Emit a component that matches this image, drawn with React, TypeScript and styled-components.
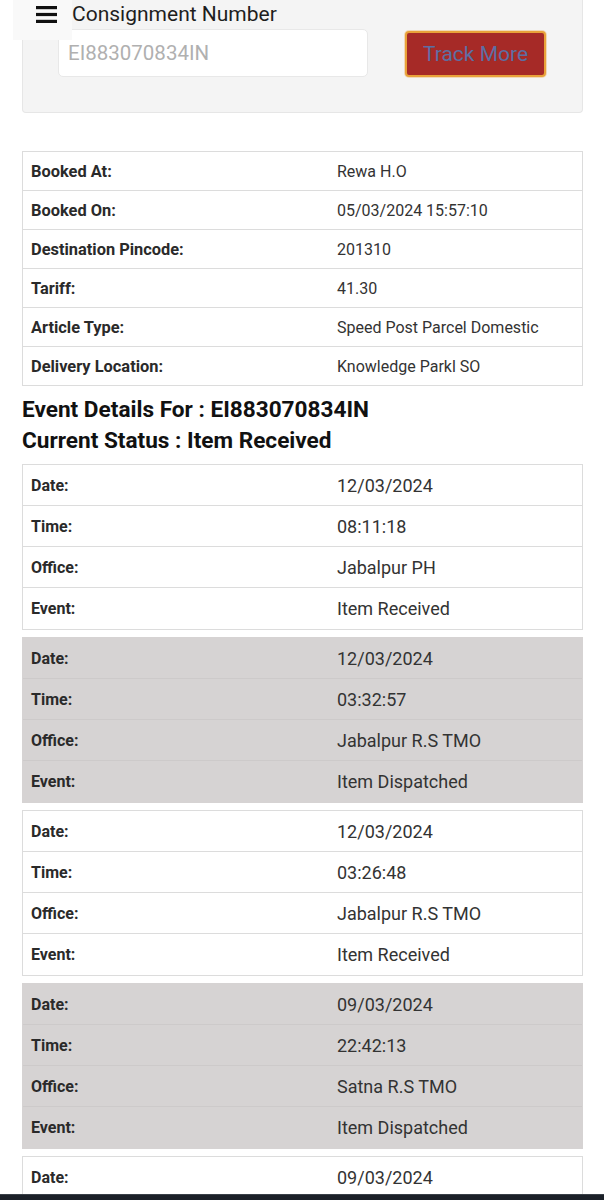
import React from 'react';
import styled, { createGlobalStyle } from 'styled-components';

const GlobalStyle = createGlobalStyle`
  body {
    margin: 0;
    background: #fff;
    font-family: Roboto, "Liberation Sans", Arial, sans-serif;
    color: #222;
  }
`;

const info = [
	{ label: 'Booked At:', value: 'Rewa H.O' },
	{ label: 'Booked On:', value: '05/03/2024 15:57:10' },
	{ label: 'Destination Pincode:', value: '201310' },
	{ label: 'Tariff:', value: '41.30' },
	{ label: 'Article Type:', value: 'Speed Post Parcel Domestic' },
	{ label: 'Delivery Location:', value: 'Knowledge Parkl SO' },
];

const events = [
	{ date: '12/03/2024', time: '08:11:18', office: 'Jabalpur PH', event: 'Item Received' },
	{ date: '12/03/2024', time: '03:32:57', office: 'Jabalpur R.S TMO', event: 'Item Dispatched' },
	{ date: '12/03/2024', time: '03:26:48', office: 'Jabalpur R.S TMO', event: 'Item Received' },
	{ date: '09/03/2024', time: '22:42:13', office: 'Satna R.S TMO', event: 'Item Dispatched' },
	{ date: '09/03/2024', time: '', office: '', event: '' },
];

const Page = styled.div`
	position: relative;
	padding: 0 21px 0 22px;
	height: 1200px;
	overflow: hidden;
`;

const MenuButton = styled.div`
	position: absolute;
	left: 13px;
	top: 0;
	width: 59px;
	height: 40px;
	background: #f9f9f9;
	display: flex;
	align-items: flex-start;
	padding: 6px 0 0 23px;
	box-sizing: border-box;
	z-index: 2;
`;

const SearchPanel = styled.div`
	background: #f4f4f4;
	border: 1px solid #e6e6e6;
	border-top: none;
	border-radius: 0 0 4px 4px;
	padding: 0 36px 36px 35px;
	height: 113px;
	box-sizing: border-box;
`;

const FieldLabel = styled.div`
	position: relative;
	z-index: 3;
	font-size: 21px;
	line-height: 29px;
	color: #1e1e1e;
	padding-left: 14px;
`;

const SearchRow = styled.div`
	display: flex;
	align-items: center;
	justify-content: space-between;
`;

const Input = styled.input`
	width: 310px;
	height: 48px;
	box-sizing: border-box;
	border: 1px solid #e8e8e8;
	border-radius: 5px;
	background: #fff;
	padding: 0 9px;
	font-family: Roboto, "Liberation Sans", Arial, sans-serif;
	font-size: 20.5px;
	color: #333;
	&::placeholder {
		color: #b0b0b0;
	}
`;

const TrackButton = styled.button`
	width: 141px;
	height: 46px;
	margin-top: 2px;
	background: #a62a27;
	border: 2px solid #e9a23a;
	border-radius: 4px;
	box-shadow: 0 0 0 1px #f1d9b8;
	color: #5c6fa3;
	font-family: Roboto, "Liberation Sans", Arial, sans-serif;
	font-size: 21px;
`;

const InfoTable = styled.div`
	margin-top: 38px;
	border: 1px solid #dcdcdc;
`;

const Row = styled.div<{ $tall?: boolean; $shaded?: boolean }>`
	display: grid;
	grid-template-columns: 306px 1fr;
	align-items: center;
	height: ${p => (p.$tall ? '41px' : '39px')};
	border-bottom: 1px solid ${p => (p.$shaded ? '#cdcaca' : '#dcdcdc')};
	box-sizing: border-box;
	padding-left: 8px;
	&:last-child {
		border-bottom: none;
		height: ${p => (p.$tall ? '41px' : '38px')};
	}
`;

const Label = styled.div`
	font-size: 16px;
	font-weight: 700;
	color: #2a2a2a;
`;

const InfoLabel = styled(Label)`
	font-size: 16.4px;
`;

const Value = styled.div<{ $large?: boolean }>`
	font-size: ${p => (p.$large ? '18px' : '16px')};
	color: #333;
`;

const Heading = styled.h2`
	margin: 0;
	font-size: 22.6px;
	font-weight: 700;
	line-height: 31px;
	color: #111;
`;

const Headings = styled.div`
	padding: 8px 0 8px;
`;

const EventTable = styled.div<{ $shaded: boolean }>`
	background: ${p => (p.$shaded ? '#d6d3d3' : '#fff')};
	border: 1px solid ${p => (p.$shaded ? '#d6d3d3' : '#dcdcdc')};
	margin-bottom: 7px;
`;

const NavBar = styled.div`
	position: fixed;
	left: 0;
	right: 0;
	bottom: 0;
	height: 5px;
	background: #1b2028;
	border-top: 1px solid #3a4048;
`;

const MenuIcon = () => (
	<svg width="21" height="17" viewBox="0 0 21 17">
		<rect x="0" y="0" width="21" height="3.2" fill="#111" />
		<rect x="0" y="6.9" width="21" height="3.2" fill="#111" />
		<rect x="0" y="13.8" width="21" height="3.2" fill="#111" />
	</svg>
);

export default function App() {
	return (
		<>
			<GlobalStyle />
			<Page>
				<MenuButton>
					<MenuIcon />
				</MenuButton>
				<SearchPanel>
					<FieldLabel>Consignment Number</FieldLabel>
					<SearchRow>
						<Input placeholder="EI883070834IN" />
						<TrackButton>Track More</TrackButton>
					</SearchRow>
				</SearchPanel>

				<InfoTable>
					{info.map(item => (
						<Row key={item.label}>
							<InfoLabel>{item.label}</InfoLabel>
							<Value>{item.value}</Value>
						</Row>
					))}
				</InfoTable>

				<Headings>
					<Heading>Event Details For : EI883070834IN</Heading>
					<Heading>Current Status : Item Received</Heading>
				</Headings>

				{events.map((ev, i) => {
					const shaded = i % 2 === 1;
					return (
						<EventTable key={i} $shaded={shaded}>
							<Row $tall $shaded={shaded}>
								<Label>Date:</Label>
								<Value $large>{ev.date}</Value>
							</Row>
							{ev.time && (
								<>
									<Row $tall $shaded={shaded}>
										<Label>Time:</Label>
										<Value $large>{ev.time}</Value>
									</Row>
									<Row $tall $shaded={shaded}>
										<Label>Office:</Label>
										<Value $large>{ev.office}</Value>
									</Row>
									<Row $tall $shaded={shaded}>
										<Label>Event:</Label>
										<Value $large>{ev.event}</Value>
									</Row>
								</>
							)}
						</EventTable>
					);
				})}
				<NavBar />
			</Page>
		</>
	);
}
